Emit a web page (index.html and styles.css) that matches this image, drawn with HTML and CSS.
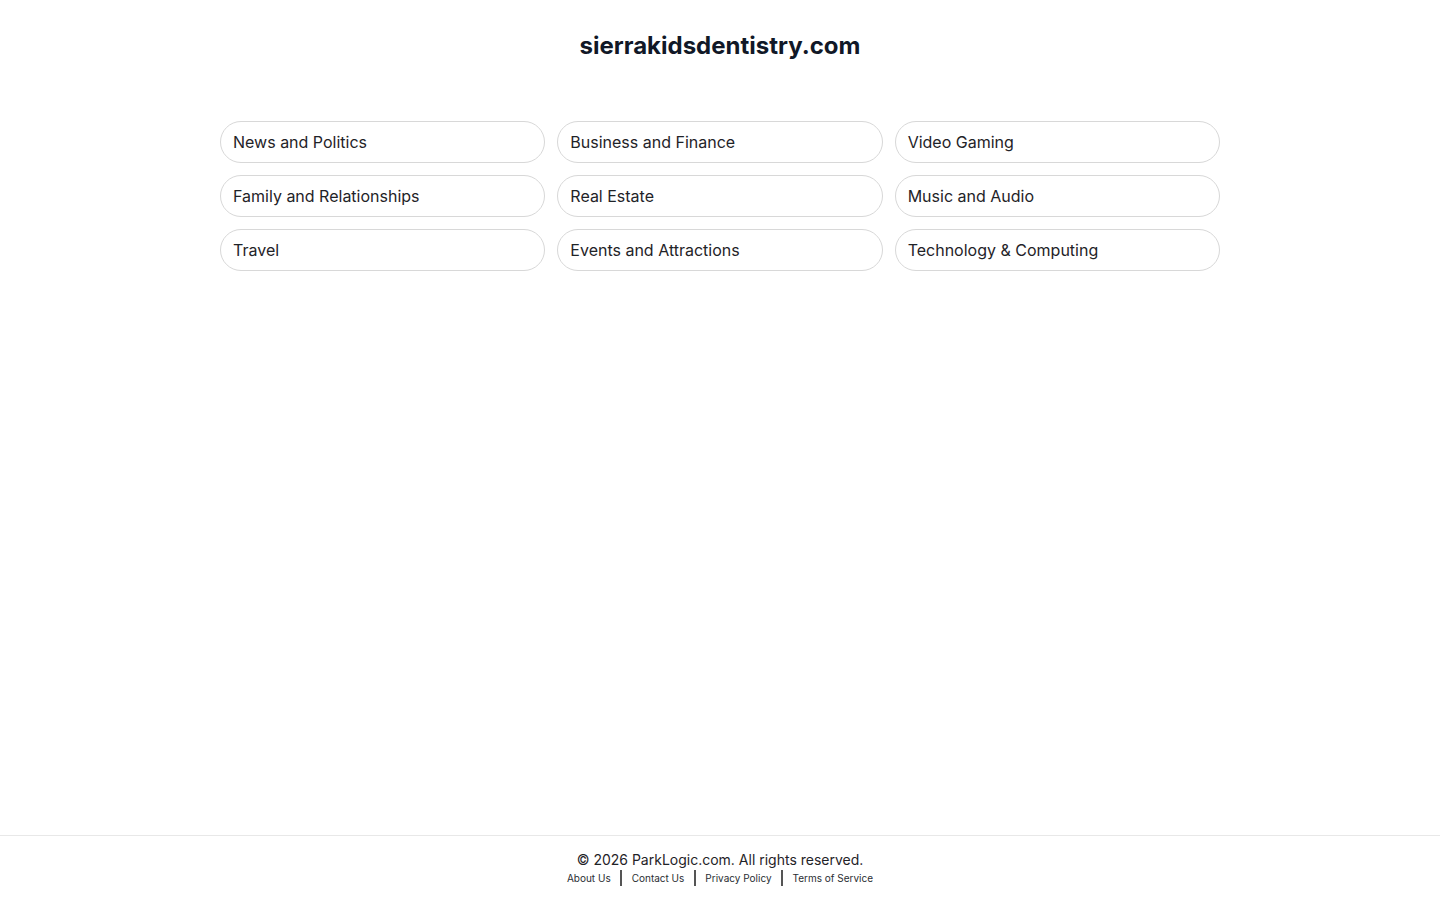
FILE: index.html
```html
<!DOCTYPE html>
<html lang="en">
<head>
<meta charset="utf-8">
<title>sierrakidsdentistry.com</title>
<link rel="stylesheet" href="styles.css">
</head>
<body>
<div class="page">
  <header class="header">
    <h1 class="title">sierrakidsdentistry.com</h1>
  </header>
  <main class="main">
    <div class="grid">
      <a class="pill" href="#">News and Politics</a>
      <a class="pill" href="#">Business and Finance</a>
      <a class="pill" href="#">Video Gaming</a>
      <a class="pill" href="#">Family and Relationships</a>
      <a class="pill" href="#">Real Estate</a>
      <a class="pill" href="#">Music and Audio</a>
      <a class="pill" href="#">Travel</a>
      <a class="pill" href="#">Events and Attractions</a>
      <a class="pill" href="#">Technology &amp; Computing</a>
    </div>
  </main>
  <footer class="footer">
    <div class="copy">© 2026 ParkLogic.com. All rights reserved.</div>
    <nav class="links">
      <a href="#">About Us</a>
      <span class="sep"></span>
      <a href="#">Contact Us</a>
      <span class="sep"></span>
      <a href="#">Privacy Policy</a>
      <span class="sep"></span>
      <a href="#">Terms of Service</a>
    </nav>
  </footer>
</div>
</body>
</html>
```

FILE: styles.css
```css
* { box-sizing: border-box; }
html, body { margin: 0; padding: 0; }
body {
  font-family: Inter, "Noto Sans", "Liberation Sans", sans-serif;
  color: #1f2328;
  background: #ffffff;
}
.page {
  min-height: 100vh;
  display: flex;
  flex-direction: column;
}
.header {
  padding-top: 31px;
  text-align: center;
}
.title {
  margin: 0;
  font-size: 24px;
  line-height: 30px;
  font-weight: 700;
  color: #111827;
}
.main {
  flex: 1;
  padding-top: 60px;
}
.grid {
  width: 1000px;
  margin: 0 auto;
  display: grid;
  grid-template-columns: repeat(3, 1fr);
  gap: 12px;
}
.pill {
  display: flex;
  align-items: center;
  height: 42px;
  padding: 0 12px;
  border: 1px solid #d8d8d8;
  border-radius: 21px;
  font-size: 16px;
  color: #1f2328;
  text-decoration: none;
}
.footer {
  border-top: 1px solid #e8e8e8;
  padding: 15px 0 13px;
  text-align: center;
}
.copy {
  font-size: 14px;
  line-height: 18px;
  color: #1f2328;
}
.links {
  display: flex;
  justify-content: center;
  align-items: center;
  gap: 9.5px;
  font-size: 10px;
  line-height: 18px;
}
.links a {
  color: #2a2e33;
  text-decoration: none;
}
.sep {
  width: 2px;
  height: 16px;
  background: #555;
}
```
